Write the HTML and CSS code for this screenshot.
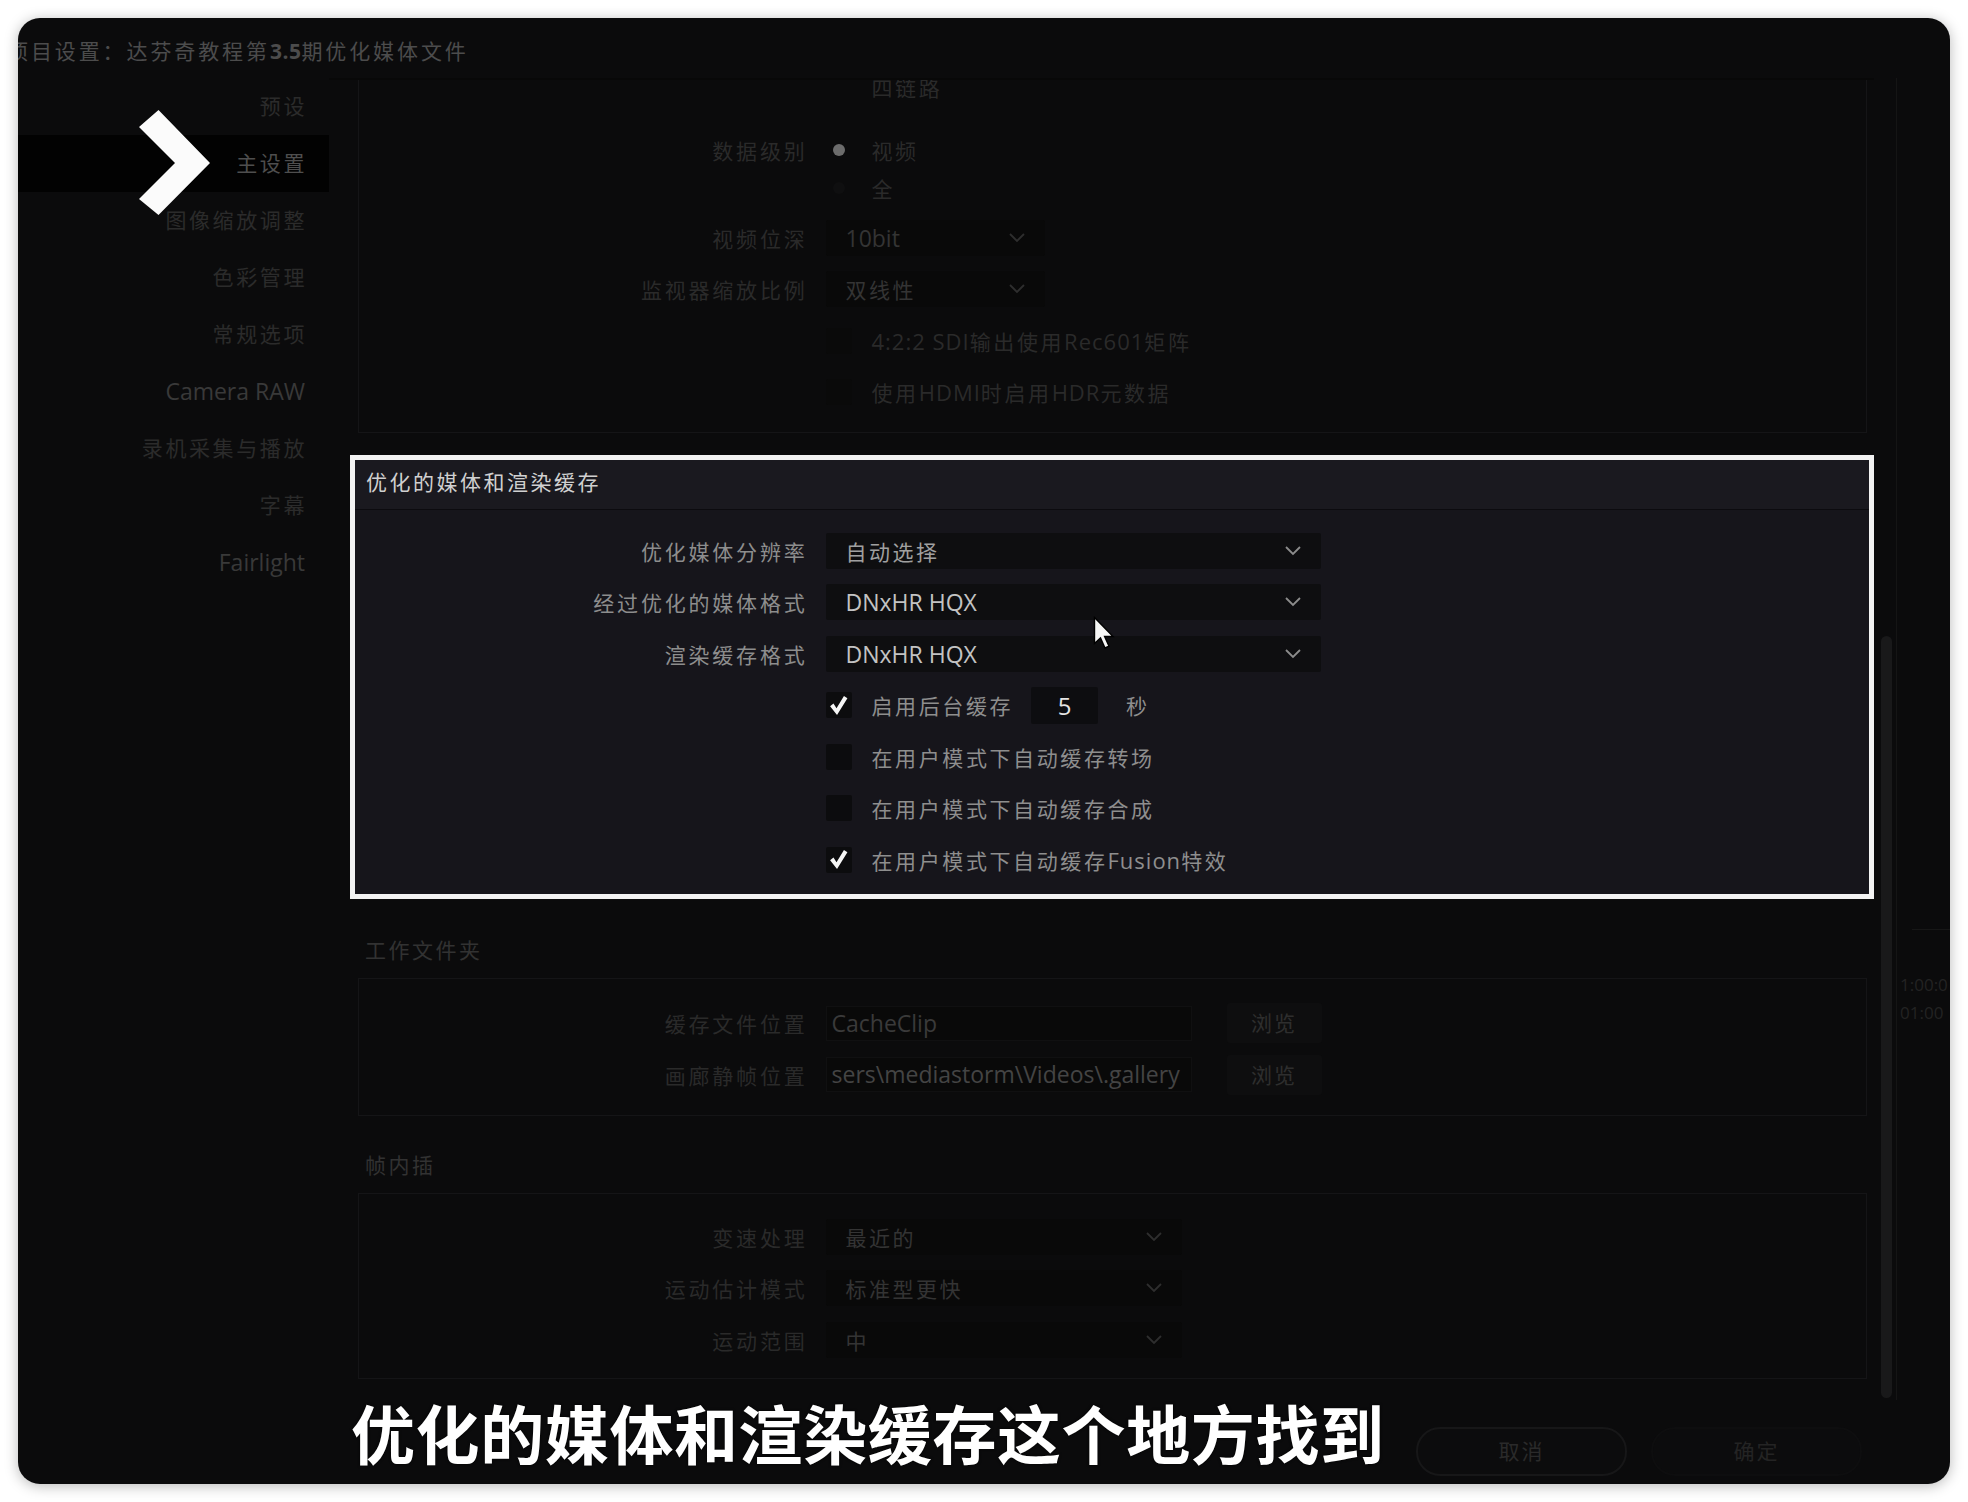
FILE: index.html
```html
<!DOCTYPE html>
<html lang="zh-CN">
<head>
    <meta charset="UTF-8">
    <meta name="viewport" content="width=device-width, initial-scale=1.0">
    <title>项目设置</title>
    <link rel="stylesheet" href="styles.css">
</head>
<body>
    <div class="window">
        <div class="titlebar">项目设置：达芬奇教程第<b>3.5</b>期优化媒体文件</div>

        <div class="content">
            <ul class="sidebar">
                <li>预设</li>
                <li class="active">主设置</li>
                <li>图像缩放调整</li>
                <li>色彩管理</li>
                <li>常规选项</li>
                <li class="latin">Camera RAW</li>
                <li>录机采集与播放</li>
                <li>字幕</li>
                <li class="latin">Fairlight</li>
            </ul>

            <div class="main">
                <!-- master settings, scrolled half out of view -->
                <section class="group dim cut">
                    <div class="row">
                        <span class="label"></span>
                        <div class="opt"><span class="slot"></span><span>四链路</span></div>
                    </div>
                    <div class="row short gap-top">
                        <span class="label">数据级别</span>
                        <div class="opt"><span class="slot"><i class="radio on"></i></span><span>视频</span></div>
                    </div>
                    <div class="row short">
                        <span class="label"></span>
                        <div class="opt"><span class="slot"><i class="radio"></i></span><span>全</span></div>
                    </div>
                    <div class="row gap-small">
                        <span class="label">视频位深</span>
                        <div class="select w-small">
                            <span class="val latin">10bit</span>
                            <svg class="chev" viewBox="0 0 16 10"><path d="M1 1l7 7 7-7"/></svg>
                        </div>
                    </div>
                    <div class="row">
                        <span class="label">监视器缩放比例</span>
                        <div class="select w-small">
                            <span class="val">双线性</span>
                            <svg class="chev" viewBox="0 0 16 10"><path d="M1 1l7 7 7-7"/></svg>
                        </div>
                    </div>
                    <div class="row">
                        <span class="label"></span>
                        <div class="opt"><span class="slot"><i class="box"></i></span><span><span class="lat">4:2:2 SDI</span>输出使用<span class="lat">Rec601</span>矩阵</span></div>
                    </div>
                    <div class="row">
                        <span class="label"></span>
                        <div class="opt"><span class="slot"><i class="box"></i></span><span>使用<span class="lat">HDMI</span>时启用<span class="lat">HDR</span>元数据</span></div>
                    </div>
                </section>

                <section class="group highlight">
                    <div class="group-head">优化的媒体和渲染缓存</div>
                    <div class="group-body">
                        <div class="row">
                            <span class="label">优化媒体分辨率</span>
                            <div class="select w-wide">
                                <span class="val">自动选择</span>
                                <svg class="chev" viewBox="0 0 16 10"><path d="M1 1l7 7 7-7"/></svg>
                            </div>
                        </div>
                        <div class="row">
                            <span class="label">经过优化的媒体格式</span>
                            <div class="select w-wide">
                                <span class="val latin bright">DNxHR HQX</span>
                                <svg class="chev" viewBox="0 0 16 10"><path d="M1 1l7 7 7-7"/></svg>
                            </div>
                        </div>
                        <div class="row">
                            <span class="label">渲染缓存格式</span>
                            <div class="select w-wide">
                                <span class="val latin bright">DNxHR HQX</span>
                                <svg class="chev" viewBox="0 0 16 10"><path d="M1 1l7 7 7-7"/></svg>
                            </div>
                        </div>
                        <div class="row">
                            <span class="label"></span>
                            <div class="opt">
                                <span class="slot"><i class="box"><svg class="tick" viewBox="0 0 20 20"><path d="M2 10.6l3.2-2.4 2.9 4.4L15.2 1l3.3 2.2L8.6 19z"/></svg></i></span>
                                <span>启用后台缓存</span>
                                <span class="num latin">5</span>
                                <span class="unit">秒</span>
                            </div>
                        </div>
                        <div class="row">
                            <span class="label"></span>
                            <div class="opt"><span class="slot"><i class="box"></i></span><span>在用户模式下自动缓存转场</span></div>
                        </div>
                        <div class="row">
                            <span class="label"></span>
                            <div class="opt"><span class="slot"><i class="box"></i></span><span>在用户模式下自动缓存合成</span></div>
                        </div>
                        <div class="row">
                            <span class="label"></span>
                            <div class="opt">
                                <span class="slot"><i class="box"><svg class="tick" viewBox="0 0 20 20"><path d="M2 10.6l3.2-2.4 2.9 4.4L15.2 1l3.3 2.2L8.6 19z"/></svg></i></span>
                                <span>在用户模式下自动缓存<span class="lat">Fusion</span>特效</span>
                            </div>
                        </div>
                    </div>
                </section>

                <div class="group-title dim first-title">工作文件夹</div>
                <section class="group dim folders">
                    <div class="row">
                        <span class="label">缓存文件位置</span>
                        <div class="path">
                            <span class="field latin">CacheClip</span>
                            <span class="browse">浏览</span>
                        </div>
                    </div>
                    <div class="row">
                        <span class="label">画廊静帧位置</span>
                        <div class="path">
                            <span class="field latin lighter">sers\mediastorm\Videos\.gallery</span>
                            <span class="browse">浏览</span>
                        </div>
                    </div>
                </section>

                <div class="group-title dim">帧内插</div>
                <section class="group dim interp">
                    <div class="row">
                        <span class="label">变速处理</span>
                        <div class="select w-mid">
                            <span class="val">最近的</span>
                            <svg class="chev" viewBox="0 0 16 10"><path d="M1 1l7 7 7-7"/></svg>
                        </div>
                    </div>
                    <div class="row">
                        <span class="label">运动估计模式</span>
                        <div class="select w-mid">
                            <span class="val">标准型更快</span>
                            <svg class="chev" viewBox="0 0 16 10"><path d="M1 1l7 7 7-7"/></svg>
                        </div>
                    </div>
                    <div class="row">
                        <span class="label">运动范围</span>
                        <div class="select w-mid">
                            <span class="val">中</span>
                            <svg class="chev" viewBox="0 0 16 10"><path d="M1 1l7 7 7-7"/></svg>
                        </div>
                    </div>
                </section>
            </div>

            <div class="scrollcol"><div class="thumb"></div></div>

            <div class="strip">
                <div class="strip-line"></div>
                <div class="strip-time latin">1:00:0</div>
                <div class="strip-time latin">01:00</div>
            </div>
        </div>

        <div class="footer">
            <span class="btn">取消</span>
            <span class="btn faint">确定</span>
        </div>

        <!-- video overlays -->
        <svg class="chevron" viewBox="0 0 80 114"><polygon points="22.5,4 74,57 22.5,109 3,93 39,57 3,21"/></svg>
        <svg class="cursor" viewBox="0 0 22 34"><path d="M1.5 1.5v26l6-5.5 4.5 10 4-1.8-4.4-9.7h8.4z"/></svg>
        <div class="subtitle">优化的媒体和渲染缓存这个地方找到</div>
    </div>
</body>
</html>
```

FILE: styles.css
```css
* {
    box-sizing: border-box;
}
body {
    margin: 0;
    background-color: #fff;
    font-family: "Open Sans", "Noto Sans CJK SC", sans-serif;
}
.window {
    position: relative;
    display: flex;
    flex-direction: column;
    width: 1932px;
    height: 1466px;
    margin: 18px;
    background-color: #0b0b0c;
    border-radius: 22px;
    overflow: hidden;
    box-shadow: 0 2px 14px rgba(0, 0, 0, 0.28);
}
.titlebar {
    height: 60px;
    padding-top: 6px;
    margin-left: -11px;
    line-height: 54px;
    font-size: 21px;
    letter-spacing: 2.9px;
    color: #4c4c4c;
    white-space: nowrap;
}
.titlebar b {
    font-weight: 700;
    letter-spacing: 0.5px;
}
.content {
    display: grid;
    grid-template-columns: 311px 1545px 22px 54px;
    height: 1322px;
}
.lat {
    font-size: 22px;
    letter-spacing: 1px;
}

/* sidebar */
.sidebar {
    list-style: none;
    margin: 0;
    padding: 0;
    text-align: right;
}
.sidebar li {
    height: 57px;
    line-height: 57px;
    padding-right: 22px;
    font-size: 21px;
    letter-spacing: 2.6px;
    color: #2b2b2b;
}
.sidebar li.active {
    background-color: #020202;
    color: #4e4e4e;
}
.sidebar li.latin {
    font-size: 23px;
    letter-spacing: 0;
    color: #393939;
    padding-right: 24px;
}

/* main column */
.main {
    overflow: hidden;
    padding: 0 7px 0 29px;
    border-top: 2px solid #080808;
}
.group {
    border: 1px solid #151517;
    --lw: 448.5px;
}
.group.cut {
    margin-top: -42px;
    padding: 22px 0 14px;
}
.row {
    display: grid;
    grid-template-columns: var(--lw) 1fr;
    column-gap: 18px;
    align-items: center;
    height: 51.5px;
}
.row.short {
    height: 38px;
}
.row.gap-top {
    margin-top: 18.5px;
}
.row.gap-small {
    margin-top: 5px;
}
.label {
    text-align: right;
    font-size: 21px;
    letter-spacing: 2.8px;
    color: #8d8d8d;
    white-space: nowrap;
}
.opt {
    display: flex;
    align-items: center;
    font-size: 21px;
    letter-spacing: 2.6px;
    color: #8e8e8e;
    white-space: nowrap;
}
.slot {
    display: flex;
    align-items: center;
    justify-content: center;
    width: 26px;
    height: 26px;
    margin-right: 20px;
}
.box {
    display: flex;
    align-items: center;
    justify-content: center;
    width: 26px;
    height: 26px;
    background-color: #0c0c0e;
    border-radius: 2px;
}
.tick {
    width: 21px;
    height: 21px;
    fill: #f6f6f6;
}
.radio {
    width: 12px;
    height: 12px;
    border-radius: 50%;
    background-color: #0f0f10;
}
.radio.on {
    background-color: #6c6c6c;
}
.num {
    width: 67px;
    height: 37px;
    margin-left: 18px;
    line-height: 37px;
    text-align: center;
    font-size: 24px;
    letter-spacing: 0;
    color: #e4e4e4;
    background-color: #0d0d10;
    border-radius: 2px;
}
.unit {
    margin-left: 28px;
}
.select {
    display: flex;
    align-items: center;
    justify-content: space-between;
    height: 36px;
    padding: 0 20px;
    background-color: #0e0e10;
    border-radius: 2px;
}
.select .val {
    font-size: 21px;
    letter-spacing: 2.5px;
    color: #a0a0a0;
    white-space: nowrap;
}
.select .val.latin {
    font-size: 23px;
    letter-spacing: 0;
}
.select .val.bright {
    color: #c3c3c3;
}
.chev {
    width: 16px;
    height: 10px;
    fill: none;
    stroke: #8c8c8c;
    stroke-width: 1.8;
}
.w-small {
    width: 219px;
}
.w-mid {
    width: 356px;
}
.w-wide {
    width: 495px;
}

/* the boxed section */
.group.highlight {
    --lw: 452.5px;
    margin: 22px -7px 0 -8px;
    border: 5px solid #f3f3f3;
    background-color: #16151b;
}
.group-head {
    height: 50px;
    line-height: 45px;
    padding-left: 11px;
    font-size: 21px;
    letter-spacing: 2.5px;
    color: #d0d0d0;
    background-color: #1a191f;
    border-bottom: 1px solid #0c0b0f;
}
.group-body {
    padding: 15px 0 8.5px;
}

/* faded sections */
.dim .label,
.dim .opt {
    color: #2a2a2a;
}
.dim .select {
    background-color: #090909;
}
.dim .select .val {
    color: #343434;
}
.dim .chev {
    stroke: #2e2e2e;
}
.dim .box {
    background-color: #0a0a0a;
}
.group-title {
    height: 51px;
    line-height: 51px;
    padding-left: 7px;
    margin-top: 24.5px;
    font-size: 21px;
    letter-spacing: 2.5px;
    color: #323232;
}
.group-title.first-title {
    margin-top: 26px;
}
.group.folders {
    margin-top: 1.5px;
    padding: 19px 0 14px;
}
.group.interp {
    margin-top: 2px;
    padding: 17px 0 12.5px;
}
.path {
    display: flex;
    align-items: center;
}
.field {
    width: 366px;
    height: 35px;
    line-height: 33px;
    padding-left: 5px;
    font-size: 23px;
    color: #3a3a3a;
    background-color: #090909;
    border: 1px solid #101011;
    overflow: hidden;
    white-space: nowrap;
}
.field.lighter {
    color: #444;
}
.browse {
    width: 95px;
    height: 40px;
    margin-left: 35px;
    line-height: 40px;
    text-align: center;
    font-size: 21px;
    letter-spacing: 2px;
    color: #2e2e2e;
    background-color: #0e0e0f;
    border-radius: 3px;
}

/* right edge */
.scrollcol {
    padding: 558px 0 0 7px;
}
.thumb {
    width: 11px;
    height: 762px;
    background-color: #19191a;
    border-radius: 6px;
}
.strip {
    border-left: 1px solid #151515;
    padding-top: 851px;
}
.strip-line {
    height: 1px;
    margin-left: 15px;
    background-color: #171717;
}
.strip-time {
    padding-left: 3px;
    font-size: 17px;
    line-height: 28px;
    color: #232323;
    white-space: nowrap;
}
.strip-line + .strip-time {
    margin-top: 41px;
}

/* footer */
.footer {
    display: flex;
    justify-content: flex-end;
    align-items: flex-start;
    gap: 24px;
    height: 84px;
    padding: 27px 88px 0 0;
}
.btn {
    width: 211px;
    height: 49px;
    line-height: 45px;
    text-align: center;
    font-size: 21px;
    letter-spacing: 2px;
    color: #2a2a2a;
    background-color: #0c0c0d;
    border: 2px solid #171718;
    border-radius: 24px;
}
.btn.faint {
    border-color: #0e0e0f;
    color: #242424;
}

/* overlays from the video */
.chevron {
    position: absolute;
    left: 118px;
    top: 88px;
    width: 80px;
    height: 114px;
    fill: #fbfbfb;
}
.cursor {
    position: absolute;
    left: 1075px;
    top: 598px;
    width: 22px;
    height: 34px;
    fill: #f6f6f6;
    stroke: #000;
    stroke-width: 1.4;
}
.subtitle {
    position: absolute;
    left: 333px;
    top: 1381px;
    font-family: "Noto Sans CJK SC", sans-serif;
    font-size: 64px;
    font-weight: 700;
    line-height: 64px;
    letter-spacing: 0.6px;
    color: #fff;
    text-shadow: 0 0 3px #000;
    white-space: nowrap;
}
```
